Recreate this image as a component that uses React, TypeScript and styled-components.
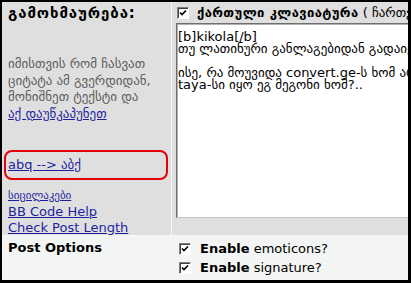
import React from "react";
import styled, { createGlobalStyle } from "styled-components";

const GlobalStyle = createGlobalStyle`
  body {
    margin: 0;
    font-family: "DejaVu Sans", Verdana, sans-serif;
  }
`;

const Frame = styled.div`
  width: 411px;
  height: 283px;
  box-sizing: border-box;
  padding: 2px 3px 3px 2px;
  background: #000;
  overflow: hidden;
`;

const Table = styled.div`
  display: grid;
  grid-template-columns: 169px 236px;
  grid-template-rows: 233px 44px;
  gap: 1px;
  background: #f7f7f7;
  height: 100%;
  overflow: hidden;
`;

const Cell = styled.div<{ $tone: "dark" | "light" }>`
  background: ${(p) => (p.$tone === "dark" ? "#dedfde" : "#f3f5f4")};
  min-width: 0;
  overflow: hidden;
  font-size: 13px;
  color: #000;
`;

const SideColumn = styled(Cell)`
  display: flex;
  flex-direction: column;
  align-items: flex-start;
  padding: 3px 0 0 6px;
`;

const Heading = styled.div`
  font-weight: bold;
  font-size: 15px;
  letter-spacing: 0.9px;
  line-height: 16px;
  white-space: nowrap;
`;

const Hint = styled.div`
  margin-top: 35px;
  color: #5e5e5e;
  line-height: 16.5px;
`;

const Link = styled.a<{ $small?: boolean }>`
  color: #1f1f9e;
  text-decoration: underline;
  font-size: ${(p) => (p.$small ? "11px" : "13px")};
  line-height: 14px;
  white-space: nowrap;
  cursor: pointer;
`;

const HintLink = styled(Link)`
  line-height: 16.5px;
`;

const Highlight = styled.div`
  margin: 28px 0 0 -4px;
  width: 164px;
  height: 30px;
  box-sizing: border-box;
  border: 2px solid #e6000a;
  border-radius: 8px;
  padding-left: 2px;
  display: flex;
  align-items: center;
`;

const LinkList = styled.div`
  margin-top: 9px;
  display: flex;
  flex-direction: column;
  align-items: flex-start;
  gap: 2px;
`;

const EditorColumn = styled(Cell)`
  display: flex;
  flex-direction: column;
  padding-left: 5px;
`;

const KeyboardRow = styled.div`
  height: 21px;
  display: flex;
  align-items: center;
  gap: 8px;
  white-space: nowrap;
`;

const Bold = styled.b`
  font-weight: bold;
`;

const KeyboardLabel = styled(Bold)`
  letter-spacing: 0.4px;
`;

const Editor = styled.textarea`
  margin: 0 0 0 -1px;
  width: 280px;
  height: 195px;
  box-sizing: border-box;
  flex-shrink: 0;
  padding: 7px 1px 5px;
  border: 1px solid;
  border-color: #6f6f6f #c8c4c0 #c8c4c0 #6f6f6f;
  box-shadow: inset 1px 1px #b0b0b0;
  background: #fff;
  font-family: "DejaVu Sans", Verdana, sans-serif;
  font-size: 13px;
  line-height: 12px;
  color: #000;
  resize: none;
  overflow: hidden;
  outline: none;
`;

const OptionsTitle = styled(Cell)`
  padding: 4px 0 0 6px;
  font-weight: bold;
  line-height: 16px;
`;

const OptionsList = styled(Cell)`
  padding: 3px 0 0 7px;
`;

const OptionRow = styled.label`
  height: 19px;
  display: flex;
  align-items: center;
  gap: 9px;
  white-space: nowrap;
`;

const Box = styled.span`
  width: 12px;
  height: 12px;
  box-sizing: border-box;
  flex-shrink: 0;
  display: inline-flex;
  align-items: center;
  justify-content: center;
  border: 1px solid;
  border-color: #808080 #ffffff #ffffff #808080;
  box-shadow: inset 1px 1px #404040;
  background: #fff;
`;

const Checkbox = () => (
  <Box>
    <svg width="8" height="8" viewBox="0 0 8 8">
      <path d="M1 3.5 L3 5.5 L7 1.5" fill="none" stroke="#000" strokeWidth="1.7" />
    </svg>
  </Box>
);

const message = [
  "[b]kikola[/b]",
  "თუ ლათინური განლაგებიდან გადაიყვანს ქართულად",
  "",
  "ისე, რა მოუვიდა convert.ge-ს ხომ არ გაფუჭდა?",
  "taya-სი იყო ეგ მეგონი ხომ?..",
].join("\n");

export default function App() {
  return (
    <>
      <GlobalStyle />
      <Frame>
        <Table>
          <SideColumn $tone="dark">
            <Heading>გამოხმაურება:</Heading>
            <Hint>
              იმისთვის რომ ჩასვათ
              <br />
              ციტატა ამ გვერდიდან,
              <br />
              მონიშნეთ ტექსტი და
              <br />
              <HintLink>აქ დაუწკაპუნეთ</HintLink>
            </Hint>
            <Highlight>
              <Link>abq --&gt; აბქ</Link>
            </Highlight>
            <LinkList>
              <Link $small>სიცილაკები</Link>
              <Link>BB Code Help</Link>
              <Link>Check Post Length</Link>
            </LinkList>
          </SideColumn>
          <EditorColumn $tone="dark">
            <KeyboardRow>
              <Checkbox />
              <span>
                <KeyboardLabel>ქართული კლავიატურა</KeyboardLabel> ( ჩართვა / გამორთვა )
              </span>
            </KeyboardRow>
            <Editor wrap="off" readOnly defaultValue={message} />
          </EditorColumn>
          <OptionsTitle $tone="light">Post Options</OptionsTitle>
          <OptionsList $tone="light">
            <OptionRow>
              <Checkbox />
              <span>
                <Bold>Enable</Bold> emoticons?
              </span>
            </OptionRow>
            <OptionRow>
              <Checkbox />
              <span>
                <Bold>Enable</Bold> signature?
              </span>
            </OptionRow>
          </OptionsList>
        </Table>
      </Frame>
    </>
  );
}
